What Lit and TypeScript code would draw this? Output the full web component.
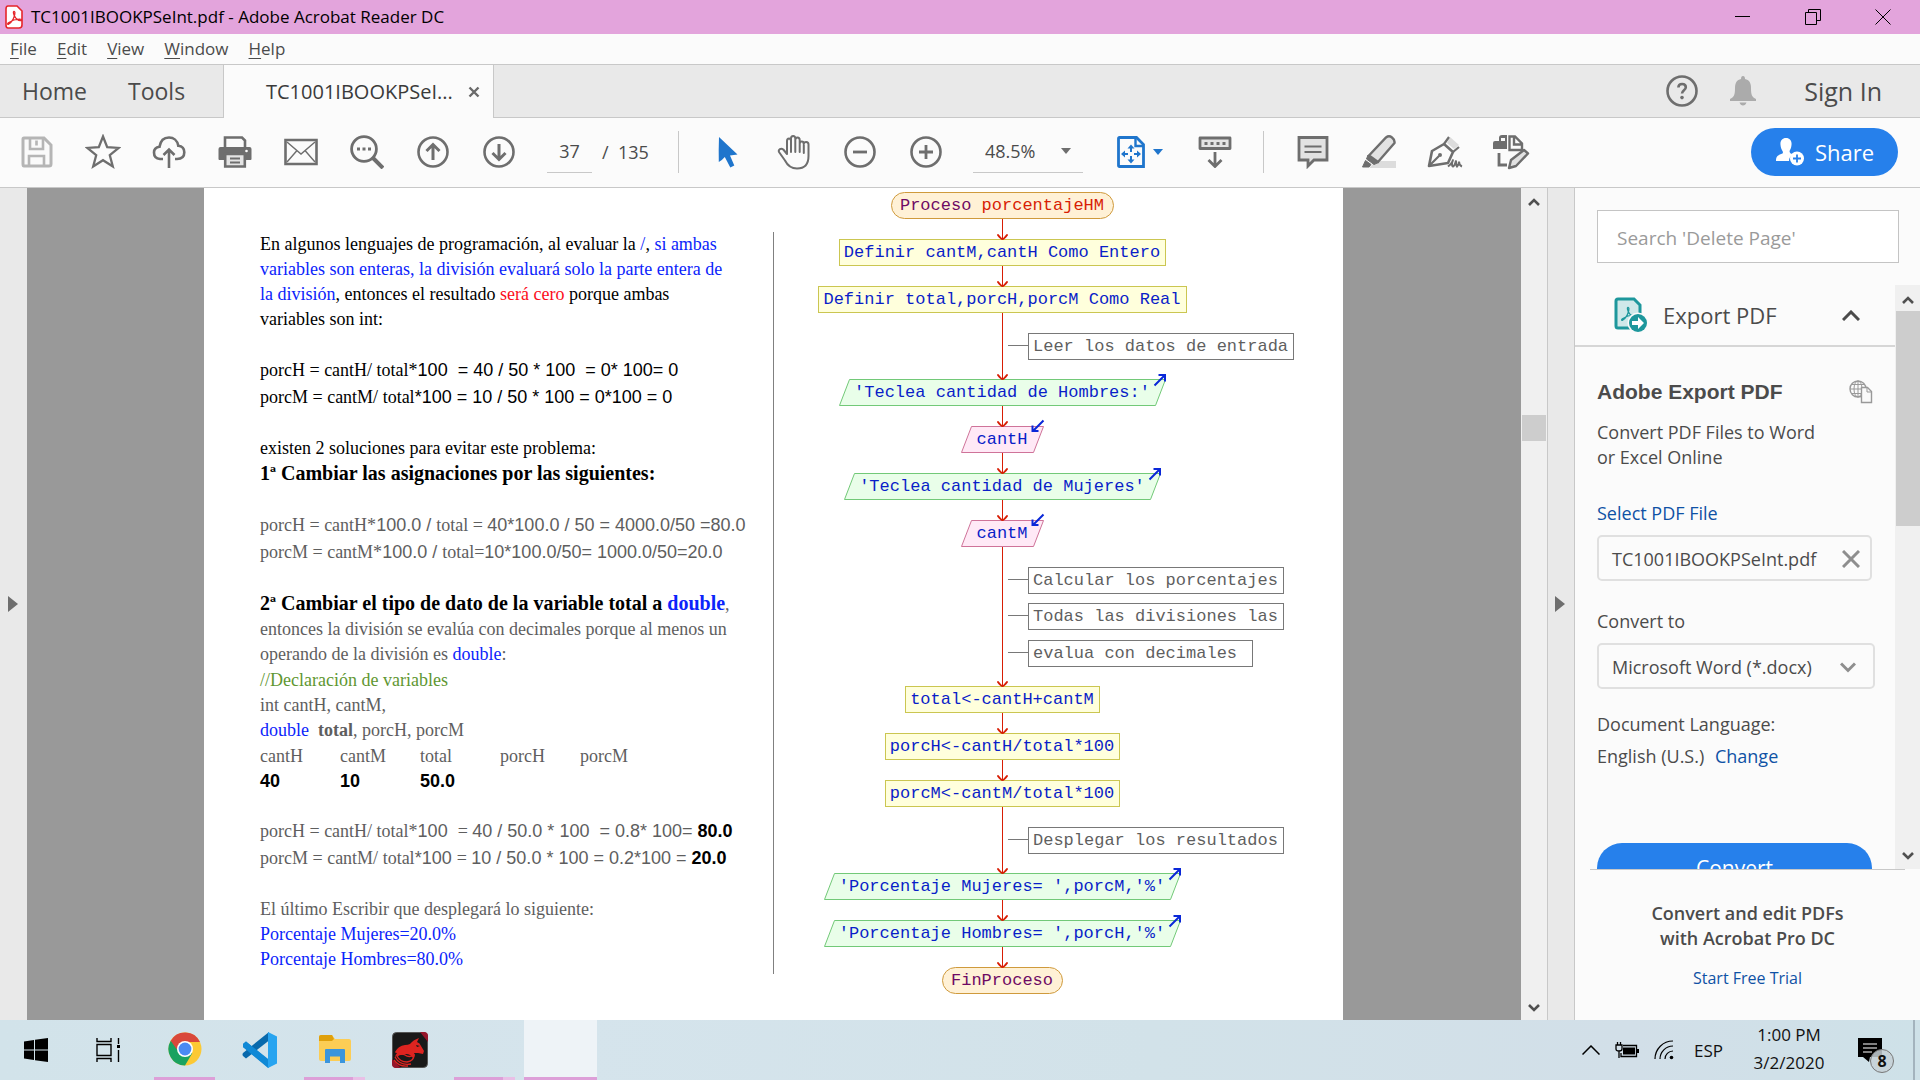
import { LitElement, html, svg, css, nothing } from "lit";
import { customElement } from "lit/decorators.js";

/* ---------- icons ---------- */

const trefoil = svg`<path d="M3.600 15.200C7 13.400 10.400 7 9.900 3.400C9.600 1.900 8.200 2.200 8.400 4C8.900 7.400 12 11.600 15.600 11.700C17 11.600 16.700 10.200 15.200 10.200C11 10 6 12 3.400 13.700C2.100 14.800 2.600 15.900 3.600 15.200Z" fill="none" stroke="currentColor" stroke-width="1.300" stroke-linejoin="round"/>`;

const icon = (w: number, h: number, body: unknown) =>
  html`<svg width=${w} height=${h} viewBox="0 0 ${w} ${h}" fill="none" aria-hidden="true">${body}</svg>`;

const icons = {
  app: icon(18, 24, svg`<path d="M3 1h9l5 5v14q0 3-3 3H3q-2 0-2-3V4q0-3 2-3z" fill="#fff" stroke="#e5252a" stroke-width="1.600"/><g color="#e5252a" transform="translate(0 4)">${trefoil}</g>`),
  minimize: icon(16, 16, svg`<path d="M0 7.500h15" stroke="#000"/>`),
  restore: icon(16, 16, svg`<path d="M.5 3.500h11v12h-11zM3.500 3V.5h12v11H12" stroke="#000"/>`),
  close: icon(16, 16, svg`<path d="M.5.5l15 15M15.500.5l-15 15" stroke="#000"/>`),
  tabClose: icon(12, 12, svg`<path d="M1.500 1.500l9 9M10.500 1.500l-9 9" stroke="#6a6a6a" stroke-width="2.400"/>`),
  help: icon(32, 32, svg`<circle cx="16" cy="16" r="14.500" stroke="#6e6e6e" stroke-width="2.600"/><path d="M12.400 12.600q0-3.600 3.700-3.600t3.700 3.300c0 3-3.800 2.900-3.800 6.300" stroke="#6e6e6e" stroke-width="2.600"/><circle cx="16" cy="22.600" r="1.800" fill="#6e6e6e"/>`),
  bell: icon(26, 30, svg`<path d="M13 0q2 0 2 3c4 1 6 3.500 6 9 0 7 1 9 5 11v2H0v-2c4-2 5-4 5-11 0-5.500 2-8 6-9q0-3 2-3zM9.500 26.500h7q-1 3-3.500 3t-3.500-3z" fill="#ababab"/>`),
  save: icon(32, 32, svg`<path d="M3 2h20l7 7v19q0 2-2 2H3q-1 0-1-2V3q0-1 1-1z" fill="#fafafa" stroke="#b5b5b5" stroke-width="3"/><path d="M9 2v11h13V2M15.500 4.500v5M8 30V20h15v10" stroke="#b5b5b5" stroke-width="2.600"/>`),
  star: icon(36, 36, svg`<path d="M18 2.500l4.200 10.700 11.500.7-8.900 7.300 3 11.200L18 26.200l-9.800 6.200 3-11.200-8.900-7.300 11.500-.7z" stroke="#6e6e6e" stroke-width="2.300"/>`),
  cloud: icon(34, 34, svg`<path d="M11 24H8q-6-.5-6-6.500 0-5 5.500-5.700C8.500 5.500 12 2.500 17 2.500c4.500 0 8.500 3 9.300 8.300 4 .5 6 3 6 6.500 0 4-2.500 6.700-7.300 6.700h-2" stroke="#6e6e6e" stroke-width="2.600"/><path d="M17 33V15M11.500 20l5.500-5.500 5.500 5.500" stroke="#6e6e6e" stroke-width="2.600"/>`),
  print: icon(34, 34, svg`<path d="M7 13V2.500h17l3 3V13" stroke="#6e6e6e" stroke-width="2.600"/><path d="M2.500 12h29q2 0 2 2v10q0 1-1 1H28v-5H6v5H1.500q-1 0-1-1V14q0-2 2-2z" fill="#6e6e6e"/><path d="M7.200 19h19.600v12.500H7.200z" fill="#e4e4e4" stroke="#6e6e6e" stroke-width="2.600"/><path d="M12 23.500h10M12 27.500h10" stroke="#6e6e6e" stroke-width="1.800"/><circle cx="28.500" cy="16" r="1.300" fill="#fff"/>`),
  mail: icon(34, 28, svg`<path d="M1.500 2h31v24h-31z" stroke="#6e6e6e" stroke-width="2.600"/><path d="M3 4l14 12L31 4M3 24l10-11.500M31 24L21 12.500" stroke="#6e6e6e" stroke-width="1.400"/>`),
  find: icon(34, 34, svg`<circle cx="14" cy="14" r="12.400" stroke="#6e6e6e" stroke-width="2.800"/><path d="M23 23l10 10" stroke="#6e6e6e" stroke-width="4"/><path d="M7 12.500h3v3H7zM12.500 12.500h3v3h-3zM18 12.500h3v3h-3z" fill="#6e6e6e"/>`),
  up: icon(32, 32, svg`<circle cx="16" cy="16" r="14.500" stroke="#6e6e6e" stroke-width="2.600"/><path d="M16 24V9M9.500 15L16 8.500l6.500 6.500" stroke="#6e6e6e" stroke-width="3"/>`),
  down: icon(32, 32, svg`<circle cx="16" cy="16" r="14.500" stroke="#6e6e6e" stroke-width="2.600"/><path d="M16 8v15M9.500 17l6.500 6.500 6.500-6.500" stroke="#6e6e6e" stroke-width="3"/>`),
  pointer: icon(20, 32, svg`<path d="M1 1q-.5 14-.2 25 3-1.500 6-5l5.500 10.500 4-2L12 19.500l7.500-1z" fill="#1f75cc"/>`),
  hand: icon(34, 36, svg`<path d="M10 20V7c0-3.400 4-3.400 4 0V4.500c0-3.500 4.300-3.500 4.300 0V6c0-3.500 4.400-3.500 4.400 0v4c0-3.200 4-3.200 4 0 .3-2.700 4.800-3 4.800.5V22c0 8-4 12.500-11.500 12.500-6.500 0-9.500-3-12-8L2 18c-1-2.500 2-4.300 4.300-2.500L10 20zM14 6.500V18M18.300 6v12M22.700 7.500V18M26.800 11v8" stroke="#6e6e6e" stroke-width="2" stroke-linejoin="round" stroke-linecap="round"/>`),
  minus: icon(32, 32, svg`<circle cx="16" cy="16" r="14.500" stroke="#6e6e6e" stroke-width="2.600"/><path d="M9 16h14" stroke="#6e6e6e" stroke-width="2.800"/>`),
  plus: icon(32, 32, svg`<circle cx="16" cy="16" r="14.500" stroke="#6e6e6e" stroke-width="2.600"/><path d="M9 16h14M16 9v14" stroke="#6e6e6e" stroke-width="2.800"/>`),
  caret: icon(10, 6, svg`<path d="M0 0h10L5 6z" fill="#6e6e6e"/>`),
  caretBlue: icon(10, 6, svg`<path d="M0 0h10L5 6z" fill="#1f75cc"/>`),
  fit: icon(28, 32, svg`<path d="M2.500 1.500h17l7 7v22h-24q-1 0-1-1v-27q0-1 1-1z" stroke="#1f75cc" stroke-width="2.800"/><path d="M18.500 2v8H26" stroke="#1f75cc" stroke-width="2.400"/><path d="M14 8.500l3.500 4h-7zM14 27.500l3.500-4h-7zM4 18l4-3.500v7zM24 18l-4-3.500v7z" fill="#1f75cc"/><path d="M14 12v4M14 20v4M7 18h4M17 18h4" stroke="#1f75cc" stroke-width="2"/>`),
  scroll: icon(34, 32, svg`<path d="M2 2h30v10.500H2z" fill="#e4e4e4" stroke="#6e6e6e" stroke-width="2.800" stroke-linejoin="round"/><path d="M6.500 6h3v3h-3zM12.500 6h3v3h-3zM18.500 6h3v3h-3zM24.500 6h3v3h-3z" fill="#6e6e6e"/><path d="M17 16v14M10.500 24l6.500 6.500 6.500-6.500" stroke="#6e6e6e" stroke-width="2.800"/>`),
  comment: icon(32, 34, svg`<path d="M2 2.500h28V25H17l-6 6v-6H2z" fill="#e2e2e2" stroke="#6e6e6e" stroke-width="2.800"/><path d="M7.500 11.500h17M7.500 17h17" stroke="#6e6e6e" stroke-width="1.800"/>`),
  highlight: icon(36, 34, svg`<path d="M15 26h20v7H8z" fill="#dcdcdc"/><path d="M8 20.500L25 2.500q3-2.300 6 0t2.500 5.500L17 27z" fill="#e2e2e2" stroke="#6e6e6e" stroke-width="2.400"/><path d="M7 20l10.500 7.500-4.500 2-7.500-5.500zM4.500 25.500l5.500 4-2 2.500H1.500z" fill="#6e6e6e" stroke="#6e6e6e"/>`),
  sign: icon(36, 34, svg`<path d="M20 8l3-6 9 8-5 4z" fill="#dcdcdc"/><path d="M2 31L5 16l12-7 9 8-5 11z" stroke="#6e6e6e" stroke-width="2.600" stroke-linejoin="round"/><path d="M2 31l10-10M17 9l5-7M26 17l6-5" stroke="#6e6e6e" stroke-width="2.200"/><circle cx="13" cy="20" r="2" fill="#6e6e6e"/><path d="M21 31.500q5-4 5-7-2 6 0 7 2-1 3-6 0 5 1 6 2-2 2-5 0 4 3 5" stroke="#6e6e6e" stroke-width="2"/>`),
  edit: icon(38, 36, svg`<path d="M7 7V4q0-3 3-3h5v14H1V9q0-2 2-2z" fill="#6e6e6e"/><path d="M9 7V4h4v3z" fill="#fafafa"/><path d="M17.500 2.500H23l7 7V16H17.500zM22 3v7.500h8" stroke="#6e6e6e" stroke-width="2.400"/><path d="M7 19v12h8" stroke="#6e6e6e" stroke-width="2.800"/><path d="M17 34l2-8 13-10 4 3.500L24 32z" fill="#e2e2e2" stroke="#6e6e6e" stroke-width="2.400" stroke-linejoin="round"/>`),
  share: icon(30, 28, svg`<path d="M11 0c4 0 6 3 5.500 7-.3 3-1 4.500-2 6 0 2.500 2 3 3.500 3.500-3 2-4 3.500-4 6.500H1c0-5 2-6 6.500-7.500.6-.5.6-1.500 0-2.500-1-1.500-1.700-3-2-6C5 3 7 0 11 0z" fill="#fff"/><circle cx="22" cy="20.500" r="7" fill="#fff"/><path d="M22 16.500v8M18 20.500h8" stroke="#2680eb" stroke-width="1.800"/>`),
  exportPdf: icon(34, 36, svg`<path d="M4 2h16l6 6v23H4q-2 0-2-2V4q0-2 2-2z" fill="#cfe8e9" stroke="#1d979c" stroke-width="3"/><g color="#1d979c" transform="translate(5 8)">${trefoil}</g><circle cx="24" cy="26" r="10.500" fill="#fafafa"/><circle cx="24" cy="26" r="9" fill="#1d979c"/><path d="M18 24h6v-4l6 6-6 6v-4h-6z" fill="#fff"/>`),
  chevUp: icon(18, 11, svg`<path d="M1 10l8-8 8 8" stroke="#4b4b4b" stroke-width="3"/>`),
  chevDown: icon(16, 11, svg`<path d="M1 1.500l7 7 7-7" stroke="#8e8e8e" stroke-width="3"/>`),
  globe: icon(24, 24, svg`<circle cx="9" cy="9" r="8" stroke="#999" stroke-width="1.400"/><ellipse cx="9" cy="9" rx="4" ry="8" stroke="#999"/><path d="M9 1v16M1 9h16M2.500 4.500h13M2.500 13.500h13" stroke="#999"/><path d="M12.500 7.500h6l4 4v11h-10z" fill="#fafafa" stroke="#999" stroke-width="1.400"/><path d="M18 8v4h4" stroke="#999"/>`),
  clear: icon(18, 18, svg`<path d="M1 1l16 16M17 1L1 17" stroke="#8e8e8e" stroke-width="3"/>`),
  sbUp: icon(12, 10, svg`<path d="M1 8l5-5 5 5" stroke="#505050" stroke-width="2.600"/>`),
  sbDown: icon(12, 10, svg`<path d="M1 2l5 5 5-5" stroke="#505050" stroke-width="2.600"/>`),
  triangle: icon(10, 16, svg`<path d="M0 0l10 8-10 8z" fill="#6e6e6e"/>`),
  windows: icon(24, 24, svg`<path d="M0 3.500l10-1.500v9.500H0zM11 1.800L24 0v11.500H11zM0 12.500h10V22L0 20.500zM11 12.500h13V24l-13-1.800z" fill="#000"/>`),
  taskView: icon(24, 24, svg`<path d="M1 6.500h14v11H1zM1 0v3.500h14V0M1 24v-3.500h14V24M22.500 0v6M22.500 12v12" stroke="#000" stroke-width="1.400"/><path d="M21 7h3v3h-3z" fill="#000"/>`),
  chrome: icon(34, 34, svg`<circle cx="17" cy="17" r="16.500" fill="#fcc934"/><path d="M17 17L2.700 8.700A16.500 16.500 0 0 0 17 33.500l7.200-12.300z" fill="#1aa260"/><path d="M17 17H8.500L2.700 8.700A16.500 16.500 0 0 1 32 10H17z" fill="#d9483b"/><circle cx="17" cy="17" r="8" fill="#fff"/><circle cx="17" cy="17" r="6.400" fill="#4a8af4"/>`),
  code: icon(36, 36, svg`<path d="M1 12l3-2.500 23 19V36L1 15z" fill="#0a7cc4"/><path d="M1 24l3 2.500 23-18V0L1 21q-1 1.500 0 3z" fill="#0869ac"/><path d="M1 12l3-2.500 24 19L26 36 1 15z" fill="#1089d6"/><path d="M26 0l9 4.500v27L26 36z" fill="#28a4f0"/>`),
  explorer: icon(32, 28, svg`<path d="M0 2q0-2 2-2h11l3 4h14q2 0 2 2v18q0 2-2 2H2q-2 0-2-2z" fill="#fccd55"/><path d="M0 2q0-2 2-2h11l2 4-2 2H0z" fill="#dfa00c"/><path d="M6 15q0-1 1-1h18q1 0 1 1v13h-5v-6.500H11V28H6z" fill="#3b95dc"/>`),
  dragon: icon(36, 36, svg`<rect x=".5" y=".5" width="35" height="35" rx="4" fill="#191919" stroke="#555"/><path d="M28 0h4q4 0 4 4v6z" fill="#96152a"/><path d="M0 27l9 9H4q-4 0-4-4z" fill="#96152a"/><path d="M3 20q3-6 10-7 3 0 5-1 3-4 9-6l-2 4q3 1 4 4l3 5-1 3-5-1-4 0q2 3-1 5-4-6-11-3-5-1-7 3 0-3 2-5-2 0-2-1z" fill="#de2420"/><path d="M24 13l4 1-3 1z" fill="#191919"/><path d="M5 24q4-3 8-1 4 3 9 0 0 6-7 7-7 0-10-6zM3 25q5 9 16 7M2 28q5 7 14 6" stroke="#de2420" stroke-width="1.300"/>`),
  trayUp: icon(18, 10, svg`<path d="M.5 9.500L9 1l8.500 8.500" stroke="#000" stroke-width="1.500"/>`),
  battery: icon(24, 18, svg`<path d="M8 4.500h13.500v11H6V12" stroke="#000" stroke-width="1.300"/><path d="M8 6.500h12v7H8zM22 8h2v4h-2z" fill="#000"/><path d="M1 4h6v4q0 2-3 2t-3-2zM2.500 1v3M5.500 1v3M4 10v7" stroke="#000" stroke-width="1.300"/>`),
  wifi: icon(20, 20, svg`<path d="M1 19A18 18 0 0 1 19 1M6 19A13 13 0 0 1 19 6M11 19a8 8 0 0 1 8-8" stroke="#000" stroke-width="1.200"/><circle cx="17.500" cy="17.500" r="1.800" fill="#000"/>`),
  notes: icon(24, 24, svg`<path d="M0 0h24v19H12l-1 5-6-5H0z" fill="#000"/><path d="M5 6h14M5 10h14M5 14h9" stroke="#fff" stroke-width="1.200"/>`),
};

/* ---------- flowchart data ---------- */

type Kind = "terminal" | "process" | "output" | "input" | "note";
interface Step { kind: Kind; y: number; text: string; accent?: string; pad?: number }

const steps: Step[] = [
  { kind: "terminal", y: 4, text: "Proceso ", accent: "porcentajeHM" },
  { kind: "process", y: 51, text: "Definir cantM,cantH Como Entero" },
  { kind: "process", y: 98, text: "Definir total,porcH,porcM Como Real" },
  { kind: "note", y: 145, text: "Leer los datos de entrada" },
  { kind: "output", y: 191, text: "'Teclea cantidad de Hombres:'" },
  { kind: "input", y: 238, text: "cantH" },
  { kind: "output", y: 285, text: "'Teclea cantidad de Mujeres'" },
  { kind: "input", y: 332, text: "cantM" },
  { kind: "note", y: 379, text: "Calcular los porcentajes" },
  { kind: "note", y: 415, text: "Todas las divisiones las" },
  { kind: "note", y: 452, text: "evalua con decimales", pad: 1 },
  { kind: "process", y: 498, text: "total<-cantH+cantM" },
  { kind: "process", y: 545, text: "porcH<-cantH/total*100" },
  { kind: "process", y: 592, text: "porcM<-cantM/total*100" },
  { kind: "note", y: 639, text: "Desplegar los resultados" },
  { kind: "output", y: 685, text: "'Porcentaje Mujeres= ',porcM,'%'" },
  { kind: "output", y: 732, text: "'Porcentaje Hombres= ',porcH,'%'" },
  { kind: "terminal", y: 779, text: "FinProceso" },
];

const AXIS = 202;
const CHAR = 10.2;
const BOX = 26;

@customElement("flow-chart")
export class FlowChart extends LitElement {
  static styles = css`
    :host { display: block; }
    svg { display: block; }
    text { font-family: "Liberation Mono", monospace; font-size: 17px; fill: #0a1ec8; white-space: pre; text-anchor: middle; }
    .line { stroke: #d81e05; }
    .head { stroke: #d81e05; stroke-width: 2; fill: none; stroke-linecap: round; }
    .terminal { fill: #fff1d6; stroke: #cf9a3c; }
    .process { fill: #ffffdc; stroke: #cbc651; }
    .output { fill: #e9fee9; stroke: #72c978; }
    .input { fill: #ffe9f6; stroke: #cf7399; }
    .note { fill: #fff; stroke: #787878; }
    .t-terminal { fill: #6e0a64; }
    .t-note { fill: #5f5f5f; text-anchor: start; }
    .accent { fill: #d81e05; }
    .io { stroke: #0a28d8; stroke-width: 2; fill: none; }
  `;

  private shape(s: Step) {
    const chars = s.text.length + (s.accent?.length ?? 0);
    const y = s.y + 0.5;
    const mid = s.y + 18;
    if (s.kind === "note") {
      const w = Math.round((chars + (s.pad ?? 0)) * CHAR) + 10;
      return svg`<path class="note" d="M208 ${y + 12}h20"/><rect class="note" x="228.500" y=${y} width=${w} height=${BOX}/>
        <text class="t-note" x="233" y=${mid}>${s.text}</text>`;
    }
    const extra = { terminal: 18, process: 10, output: 30, input: 30 }[s.kind];
    const half = Math.round((chars * CHAR + extra) / 2);
    const l = AXIS - half + 0.5, r = AXIS + half + 0.5;
    const label = svg`<text class="t-${s.kind}" x=${AXIS} y=${mid}>${s.text}${s.accent ? svg`<tspan class="accent">${s.accent}</tspan>` : nothing}</text>`;
    if (s.kind === "terminal")
      return svg`<rect class="terminal" x=${l} y=${y} width=${r - l} height=${BOX} rx="13"/>${label}`;
    if (s.kind === "process")
      return svg`<rect class="process" x=${l} y=${y} width=${r - l} height=${BOX}/>${label}`;
    const arrow = s.kind === "output"
      ? svg`<path class="io" d="M${r - 11} ${y + 6}L${r - 1} ${y - 4}M${r - 7} ${y - 4.5}H${r - 0.5}V${y + 2}"/>`
      : svg`<path class="io" d="M${r} ${y - 6}L${r - 10} ${y + 4}M${r - 11} ${y - 1}V${y + 4.5}H${r - 5}"/>`;
    return svg`<path class=${s.kind} d="M${l + 10} ${y}H${r}L${r - 10} ${y + BOX}H${l}z"/>${label}${arrow}`;
  }

  render() {
    const nodes = steps.filter((s) => s.kind !== "note");
    return html`<svg width="500" height="812" viewBox="0 0 500 812" role="img" aria-label="Proceso porcentajeHM">
      <path class="line" d="M202.500 10V780"/>
      ${steps.map((s) => this.shape(s))}
      ${nodes.slice(1).map((s) => svg`<path class="head" d="M198 ${s.y - 4}q3 4 4.500 4q1.500 0 4.500-4"/>`)}
    </svg>`;
  }
}

/* ---------- document sheet ---------- */

@customElement("pdf-sheet")
export class PdfSheet extends LitElement {
  static styles = css`
    :host { display: flex; align-items: flex-start; background: #fff; overflow: hidden; color: #000; font-family: "Liberation Serif", serif; font-size: 18px; line-height: 25px; }
    .text { flex: none; width: 513px; margin: 44px 26px 0 56px; border-right: 1px solid #808080; white-space: nowrap; display: flex; flex-direction: column; gap: 25px; padding-bottom: 2px; }
    p, table { margin: 0; }
    .block { display: flex; flex-direction: column; gap: 1px; }
    .sum { line-height: 27px; white-space: pre; }
    .big { font-size: 20px; }
    .black { color: #000; }
    .grey { color: #5e5e5e; }
    .blue { color: #0b24fb; }
    .red { color: #fc0d1b; }
    .green { color: #5f9732; }
    .sans { font-family: "Liberation Sans", sans-serif; }
    .dark { color: #000; font-weight: 700; font-family: "Liberation Sans", sans-serif; }
    .pre { white-space: pre; }
    table { border-collapse: collapse; width: 400px; table-layout: fixed; }
    th, td { padding: 0; text-align: left; font-weight: 400; }
    td { line-height: 24px; }
  `;

  render() {
    return html`
      <article class="text">
        <p>En algunos lenguajes de programación, al evaluar la <span class="blue">/</span>, <span class="blue">si ambas<br>variables son enteras, la división evaluará solo la parte entera de<br>la división</span>, entonces el resultado <span class="red">será cero</span> porque ambas<br>variables son int:</p>
        <p class="sum">porcH = cantH/ total*<span class="sans">100  = 40 / 50 * 100  = 0* 100= 0</span>
porcM = cantM/ total<span class="sans">*100 = 10 / 50 * 100 = 0*100 = 0</span></p>
        <p>existen 2 soluciones para evitar este problema:<br><b class="big">1ª Cambiar las asignaciones por las siguientes:</b></p>
        <p class="sum grey">porcH = cantH*<span class="sans">100.0 / </span>total = <span class="sans">40*100.0 / 50 = 4000.0/50 =80.0</span>
porcM = cantM*<span class="sans">100.0 / </span>total=<span class="sans">10*100.0/50= 1000.0/50=20.0</span></p>
        <div class="block grey">
          <p><b class="big black">2ª Cambiar el tipo de dato de la variable total a <span class="blue">double</span></b>,<br>entonces la división se evalúa con decimales porque al menos un<br>operando de la división es <span class="blue">double</span>:</p>
          <p><span class="green">//Declaración de variables</span><br>int cantH, cantM,<br><span class="pre"><span class="blue">double</span>  <b>total</b>, porcH, porcM</span></p>
          <table>
            <thead><tr><th>cantH</th><th>cantM</th><th>total</th><th>porcH</th><th>porcM</th></tr></thead>
            <tbody><tr><td class="dark">40</td><td class="dark">10</td><td class="dark">50.0</td><td></td><td></td></tr></tbody>
          </table>
        </div>
        <p class="sum grey">porcH = cantH/ total*<span class="sans">100  </span>= <span class="sans">40 / 50.0 * 100  = 0.8* 100= <span class="dark">80.0</span></span>
porcM = cantM/ total<span class="sans">*100 </span>= <span class="sans">10 / 50.0 * 100 = 0.2*100 = <span class="dark">20.0</span></span></p>
        <p class="grey">El último Escribir que desplegará lo siguiente:<br><span class="blue">Porcentaje Mujeres=20.0%<br>Porcentaje Hombres=80.0%</span></p>
      </article>
      <flow-chart></flow-chart>`;
  }
}

/* ---------- shell ---------- */

const tool = (label: string, glyph: unknown) =>
  html`<button class="tool" aria-label=${label}>${glyph}</button>`;

@customElement("app-root")
export class AppRoot extends LitElement {
  static styles = css`
    :host { display: flex; flex-direction: column; height: 100vh; overflow: hidden; background: #fbfbfb; color: #4b4b4b; font-family: "Open Sans", "Noto Sans", sans-serif; font-size: 18px; }
    * { box-sizing: border-box; }
    button, input, select { font: inherit; color: inherit; background: none; border: 0; padding: 0; margin: 0; }
    a { color: #0f52a5; text-decoration: none; }
    svg { display: block; flex: none; }
    p, h1, h2, h3 { margin: 0; font-weight: 400; }

    .title { flex: none; height: 34px; background: #e3a4dc; display: flex; align-items: center; padding: 0 2px 0 5px; color: #000; }
    .title h1 { font-size: 17px; line-height: 24px; margin-left: 8px; flex: 1; }
    .win { width: 70px; height: 34px; display: grid; place-items: center; }
    .menu { flex: none; height: 31px; display: flex; gap: 20px; padding: 0 10px; align-items: center; border-bottom: 1px solid #c8c8c8; font-size: 17px; line-height: 24px; }
    .menu u { text-underline-offset: 3px; }

    .tabs { flex: none; height: 53px; background: #e9e9e9; display: flex; align-items: stretch; font-size: 23px; border-bottom: 1px solid #c8c8c8; }
    .nav { display: flex; gap: 41px; padding: 0 40px 0 22px; border-right: 1px solid #c8c8c8; align-items: center; width: 224px; }
    .tab { width: 270px; background: #fbfbfb; border-right: 1px solid #c8c8c8; margin-bottom: -1px; display: flex; align-items: center; justify-content: space-between; padding: 0 13px 0 42px; font-size: 20px; color: #3a3a3a; }
    .account { margin-left: auto; display: flex; align-items: center; gap: 32px; padding-right: 38px; }
    .account .sign { margin-left: 16px; font-size: 25px; }

    .bar { flex: none; height: 70px; display: flex; align-items: center; padding: 0 22px 2px 4px; border-bottom: 1px solid #c8c8c8; }
    .tool { width: 66px; height: 48px; display: grid; place-items: center; }
    .page { display: flex; align-items: center; gap: 10px; margin: 0 14px 0 15px; width: 102px; white-space: pre; }
    .page input { width: 45px; height: 42px; text-align: center; border-bottom: 1px solid #c8c8c8; }
    .rule { width: 1px; height: 42px; background: #c8c8c8; margin: 0 16px 0 15px; }
    .zoom { display: flex; align-items: center; width: 110px; height: 42px; border-bottom: 1px solid #c8c8c8; margin: 0 34px 0 14px; padding: 0 12px; }
    .zoom select { appearance: none; flex: 1; }
    .fit { display: flex; align-items: center; gap: 8px; margin-right: 19px; }
    .share { margin-left: auto; width: 147px; height: 48px; border-radius: 24px; background: #2680eb; color: #fff; display: flex; align-items: center; justify-content: center; gap: 10px; font-size: 22px; }

    .main { flex: 1; min-height: 0; display: flex; }
    .strip { flex: none; width: 27px; background: #e9e9e9; display: flex; align-items: center; justify-content: center; padding-right: 2px; }
    .strip.right { border-left: 1px solid #c8c8c8; border-right: 1px solid #c8c8c8; width: 28px; }
    .view { flex: 1; min-width: 0; background: #999; padding: 0 178px 0 177px; display: flex; }
    pdf-sheet { flex: 1; min-width: 0; }
    .scroll { flex: none; width: 26px; background: #f0f0f0; display: flex; flex-direction: column; align-items: center; padding: 9px 1px 7px; }
    .thumb { width: 24px; height: 26px; background: #cdcdcd; margin: 208px 0 auto; }

    .panel { flex: none; width: 345px; display: flex; flex-direction: column; }
    .search { flex: none; margin: 22px 21px 22px 22px; height: 53px; border: 1px solid #c4c4c4; background: #fff; padding: 3px 19px 0; font-size: 19px; }
    .search::placeholder { color: #9a9a9a; opacity: 1; }
    .scroller { flex: none; height: 584px; display: flex; overflow: hidden; }
    .content { flex: 1; min-width: 0; }
    .head { height: 62px; display: flex; align-items: center; padding: 0 35px 0 39px; border-bottom: 2px solid #d6d6d6; }
    .head h2 { font-size: 22px; margin-left: 15px; flex: 1; }
    .form { padding: 28px 19px 0 22px; line-height: 25px; display: flex; flex-direction: column; }
    .line { display: flex; align-items: center; justify-content: space-between; height: 34px; padding-right: 3px; }
    .line h3 { font: 700 21px "Liberation Sans", sans-serif; }
    .desc { margin-top: 11px; }
    .select-file { margin-top: 31px; }
    .field { height: 46px; margin-top: 9px; border: 2px solid #e0e0e0; border-radius: 5px; display: flex; align-items: center; justify-content: space-between; padding: 2px 10px 0 13px; width: 275px; }
    .field.wide { width: 278px; padding: 3px 17px 0 13px; }
    .field select { appearance: none; flex: 1; width: 100%; }
    .to { margin-top: 28px; }
    .lang { margin-top: 19px; line-height: 32px; }
    .lang a { margin-left: 6px; }
    .convert { flex: none; margin-top: 71px; width: 275px; height: 50px; border-radius: 25px; background: #2680eb; color: #fff; font-size: 21px; }
    .inner { width: 25px; padding: 10px 0 8px 1px; }
    .inner .thumb { height: 215px; margin: 6px 0 auto; }
    .promo { margin: 0 15px; border-top: 1px solid #c8c8c8; padding-top: 31px; text-align: center; line-height: 25px; flex: 1; }
    .promo b { font-weight: 600; }
    .promo a { display: block; margin-top: 15px; font-size: 16px; }

    .task { flex: none; height: 60px; background: linear-gradient(90deg, #d2e3ea, #d5e4ec 30%, #d2e2e9 60%, #d2dfe8 85%, #cee1e8); display: flex; color: #111; }
    .start { width: 72px; display: grid; place-items: center; }
    .start + .start { margin-right: 3px; }
    .app { width: 75px; display: flex; flex-direction: column; align-items: center; }
    .app .glyph { flex: 1; display: grid; place-items: center; }
    .under { height: 3px; width: 61px; display: flex; background: #dd9fd8; }
    .under.many { border-right: 12px solid #e9bfe6; }
    .app.active { background: #eef3f7; width: 73px; margin-left: 2px; }
    .app.active .under { width: 100%; }
    .tray { margin-left: auto; display: flex; align-items: center; }
    .tray svg { margin-right: 15px; }
    .lng { margin: 0 29px 0 5px; font-size: 17px; }
    .clock { text-align: center; line-height: 28px; width: 74px; font-size: 17px; white-space: nowrap; padding-bottom: 2px; }
    .center { position: relative; margin: 0 19px 0 32px; padding-bottom: 1px; }
    .center svg { margin: 0 12px 0 0; }
    .badge { position: absolute; left: 12px; top: 11px; width: 24px; height: 24px; border-radius: 50%; border: 1px solid #777; background: #c6d0d6d9; font: 700 16px/22px "Open Sans", sans-serif; text-align: center; }
    .peek { width: 7px; border-left: 2px solid #a3b3bd; align-self: stretch; }
  `;

  render() {
    return html`
      <header class="title">${icons.app}<h1>TC1001IBOOKPSeInt.pdf - Adobe Acrobat Reader DC</h1>
        <button class="win" aria-label="Minimize">${icons.minimize}</button><button class="win" aria-label="Restore">${icons.restore}</button><button class="win" aria-label="Close">${icons.close}</button>
      </header>
      <nav class="menu">
        ${["File", "Edit", "View", "Window", "Help"].map((m) => html`<button><u>${m[0]}</u>${m.slice(1)}</button>`)}
      </nav>
      <div class="tabs">
        <div class="nav"><button>Home</button><button>Tools</button></div>
        <div class="tab"><span>TC1001IBOOKPSeI...</span><button aria-label="Close tab">${icons.tabClose}</button></div>
        <div class="account"><button aria-label="Help">${icons.help}</button><button aria-label="Notifications">${icons.bell}</button><button class="sign">Sign In</button></div>
      </div>
      <div class="bar">
        ${tool("Save", icons.save)}${tool("Favorite", icons.star)}${tool("Upload", icons.cloud)}${tool("Print", icons.print)}${tool("Email", icons.mail)}${tool("Find", icons.find)}${tool("Previous page", icons.up)}${tool("Next page", icons.down)}
        <div class="page"><input aria-label="Page number" value="37"><span>/  135</span></div>
        <div class="rule"></div>
        ${tool("Select", icons.pointer)}${tool("Pan", icons.hand)}${tool("Zoom out", icons.minus)}${tool("Zoom in", icons.plus)}
        <div class="zoom"><select aria-label="Zoom level"><option>48.5%</option></select>${icons.caret}</div>
        <button class="fit" aria-label="Fit page">${icons.fit}${icons.caretBlue}</button>
        ${tool("Scrolling", icons.scroll)}
        <div class="rule"></div>
        ${tool("Comment", icons.comment)}${tool("Highlight", icons.highlight)}${tool("Sign", icons.sign)}${tool("Edit", icons.edit)}
        <button class="share">${icons.share}Share</button>
      </div>
      <div class="main">
        <div class="strip">${icons.triangle}</div>
        <main class="view"><pdf-sheet></pdf-sheet></main>
        <div class="scroll">${icons.sbUp}<div class="thumb"></div>${icons.sbDown}</div>
        <div class="strip right">${icons.triangle}</div>
        <aside class="panel">
          <input class="search" aria-label="Search tools" placeholder="Search 'Delete Page'">
          <div class="scroller">
            <div class="content">
              <div class="head">${icons.exportPdf}<h2>Export PDF</h2><button aria-label="Collapse">${icons.chevUp}</button></div>
              <div class="form">
                <div class="line"><h3>Adobe Export PDF</h3>${icons.globe}</div>
                <p class="desc">Convert PDF Files to Word<br>or Excel Online</p>
                <a class="select-file" href="#">Select PDF File</a>
                <div class="field"><span>TC1001IBOOKPSeInt.pdf</span><button aria-label="Remove file">${icons.clear}</button></div>
                <label class="to" for="format">Convert to</label>
                <div class="field wide"><select id="format"><option>Microsoft Word (*.docx)</option></select>${icons.chevDown}</div>
                <p class="lang">Document Language:<br>English (U.S.) <a href="#">Change</a></p>
                <button class="convert">Convert</button>
              </div>
            </div>
            <div class="scroll inner">${icons.sbUp}<div class="thumb"></div>${icons.sbDown}</div>
          </div>
          <div class="promo"><b>Convert and edit PDFs<br>with Acrobat Pro DC</b><a href="#">Start Free Trial</a></div>
        </aside>
      </div>
      <footer class="task">
        <button class="start" aria-label="Start">${icons.windows}</button><button class="start" aria-label="Task view">${icons.taskView}</button>
        <button class="app" aria-label="Chrome"><span class="glyph">${icons.chrome}</span><span class="under"></span></button>
        <button class="app" aria-label="Visual Studio Code"><span class="glyph">${icons.code}</span></button>
        <button class="app" aria-label="File Explorer"><span class="glyph">${icons.explorer}</span><span class="under many"></span></button>
        <button class="app" aria-label="Dragon Center"><span class="glyph">${icons.dragon}</span></button>
        <button class="app" aria-label="Running app"><span class="glyph"></span><span class="under many"></span></button>
        <button class="app active" aria-label="Acrobat Reader"><span class="glyph"></span><span class="under"></span></button>
        <div class="tray">${icons.trayUp}${icons.battery}${icons.wifi}
          <span class="lng">ESP</span><span class="clock">1:00 PM<br>3/2/2020</span>
          <button class="center" aria-label="Notifications">${icons.notes}<span class="badge">8</span></button>
          <span class="peek"></span>
        </div>
      </footer>`;
  }
}
